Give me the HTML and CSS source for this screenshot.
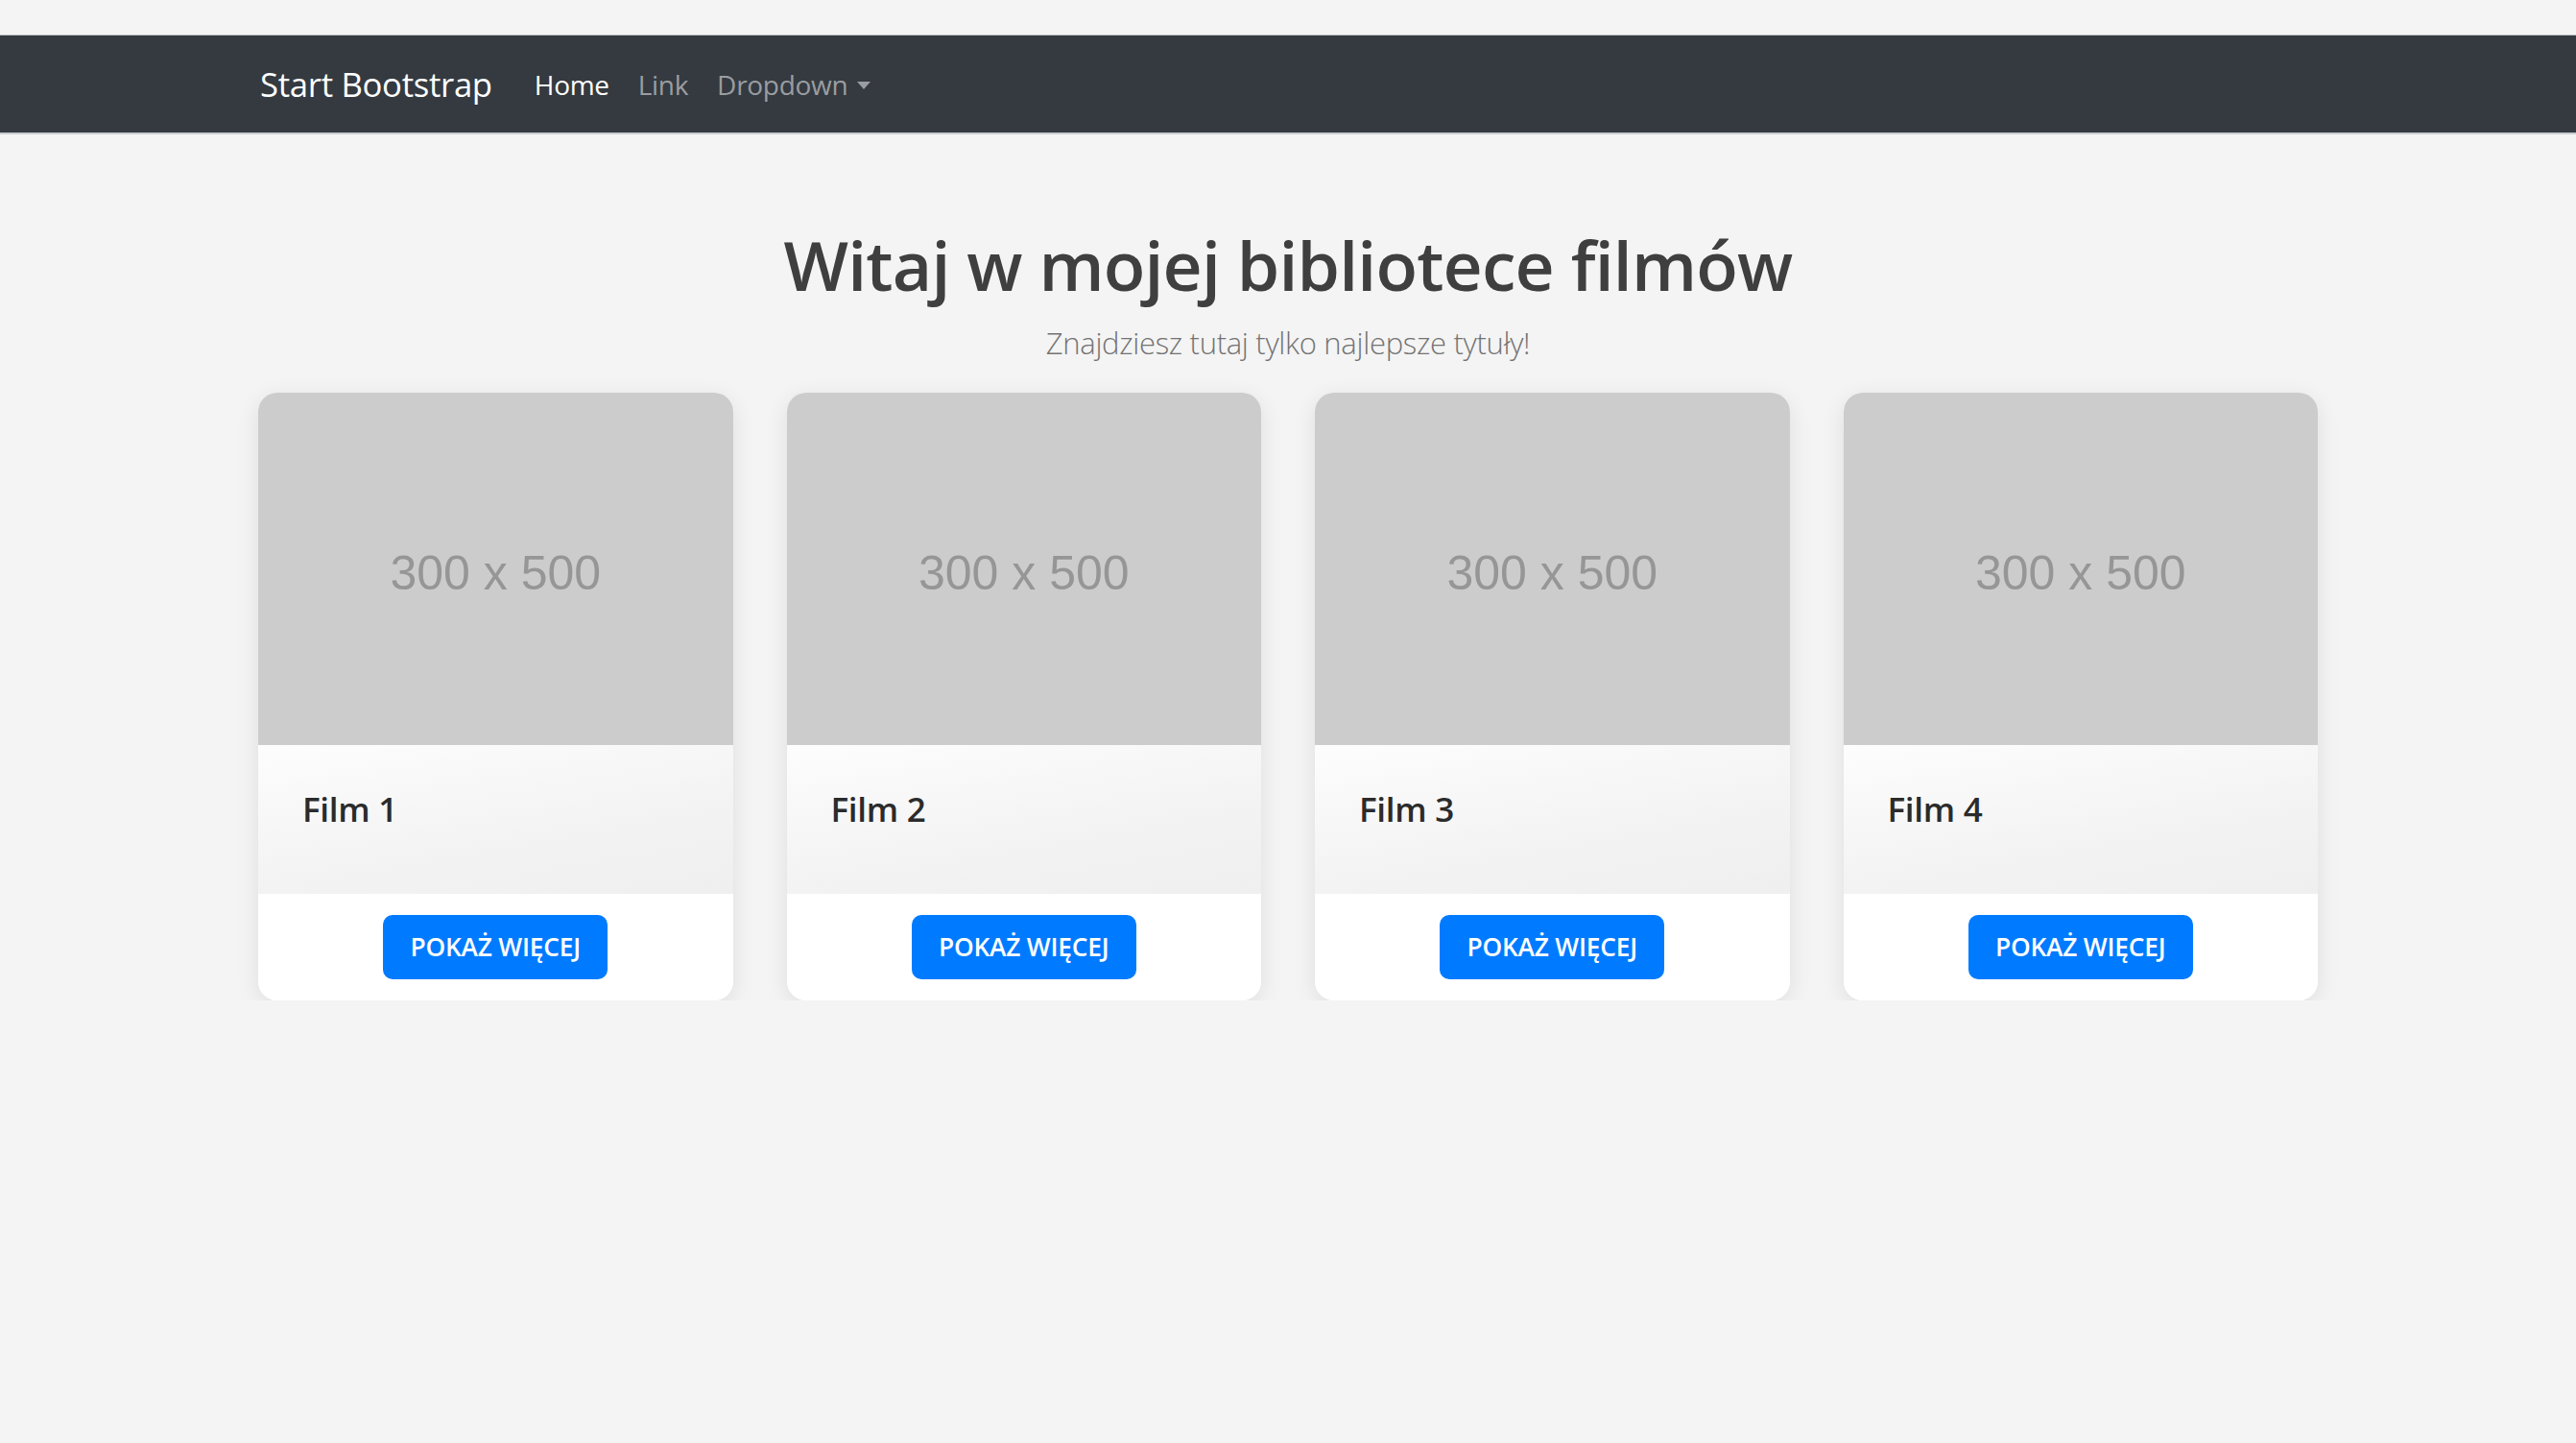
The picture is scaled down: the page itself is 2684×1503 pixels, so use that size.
FILE: index.html
```html
<!DOCTYPE html>
<html lang="pl">
<head>
<meta charset="utf-8">
<title>Biblioteka filmów</title>
<link rel="stylesheet" href="styles.css">
</head>
<body>
<nav class="navbar">
  <div class="container nav-inner">
    <a class="brand" href="#">Start Bootstrap</a>
    <ul class="nav-links">
      <li><a class="nav-link active" href="#">Home</a></li>
      <li><a class="nav-link" href="#">Link</a></li>
      <li><a class="nav-link dropdown" href="#">Dropdown<span class="caret"></span></a></li>
    </ul>
  </div>
</nav>
<main class="container">
  <header class="hero">
    <h1 class="title">Witaj w mojej bibliotece filmów</h1>
    <p class="lead">Znajdziesz tutaj tylko najlepsze tytuły!</p>
  </header>
  <section class="cards">
    <article class="card">
      <div class="poster">300 x 500</div>
      <div class="card-body"><h4 class="card-title">Film 1</h4></div>
      <div class="card-footer"><a class="btn" href="#">POKAŻ WIĘCEJ</a></div>
    </article>
    <article class="card">
      <div class="poster">300 x 500</div>
      <div class="card-body"><h4 class="card-title">Film 2</h4></div>
      <div class="card-footer"><a class="btn" href="#">POKAŻ WIĘCEJ</a></div>
    </article>
    <article class="card">
      <div class="poster">300 x 500</div>
      <div class="card-body"><h4 class="card-title">Film 3</h4></div>
      <div class="card-footer"><a class="btn" href="#">POKAŻ WIĘCEJ</a></div>
    </article>
    <article class="card">
      <div class="poster">300 x 500</div>
      <div class="card-body"><h4 class="card-title">Film 4</h4></div>
      <div class="card-footer"><a class="btn" href="#">POKAŻ WIĘCEJ</a></div>
    </article>
  </section>
</main>
</body>
</html>
```
FILE: styles.css
```css
* { box-sizing: border-box; }
html, body { margin: 0; padding: 0; }
body {
  background: #f4f4f4;
  font-family: "Open Sans", "Noto Sans", sans-serif;
  color: #212529;
  padding-top: 36px;
}
a { text-decoration: none; }

.container {
  width: 2146px;
  margin: 0 auto;
}

.navbar {
  background: #343a40;
  border-top: 1px solid #b9bbbe;
  border-bottom: 2px solid #c9ccd0;
  height: 104px;
}
.nav-inner {
  display: flex;
  align-items: center;
  height: 100%;
  padding-left: 2px;
}
.brand {
  color: #fff;
  font-size: 34.7px;
  letter-spacing: -0.3px;
  margin-right: 44px;
}
.nav-links {
  list-style: none;
  margin: 0;
  padding: 0;
  display: flex;
  gap: 30px;
}
.nav-link {
  color: #9a9da1;
  font-size: 28px;
  letter-spacing: -0.3px;
  display: flex;
  align-items: center;
}
.nav-link.active { color: #fff; }
.caret {
  width: 0;
  height: 0;
  margin-left: 10px;
  margin-top: 2px;
  border-left: 7px solid transparent;
  border-right: 7px solid transparent;
  border-top: 8px solid #9a9da1;
}

.hero {
  text-align: center;
  padding-top: 93px;
}
.title {
  margin: 0;
  font-size: 71.4px;
  font-weight: 600;
  color: #3f3f3f;
  line-height: 1.2;
  letter-spacing: -0.8px;
}
.lead {
  margin: 18px 0 0;
  font-size: 31px;
  font-weight: 300;
  color: #737373;
  line-height: 1.3;
  letter-spacing: -0.3px;
}

.cards {
  margin-top: 32px;
  display: grid;
  grid-template-columns: repeat(4, 1fr);
  gap: 56px;
}
.card {
  background: #fff;
  border-radius: 20px;
  overflow: hidden;
  box-shadow: 0 6px 24px rgba(0, 0, 0, 0.09);
}
.poster {
  height: 367px;
  background: #cccccc;
  color: #969696;
  font-family: "Liberation Sans", Arial, sans-serif;
  font-size: 50px;
  display: flex;
  align-items: center;
  justify-content: center;
  padding-top: 10px;
}
.card-body {
  height: 155px;
  background: linear-gradient(170deg, #fdfdfd 0%, #f3f3f3 60%, #efefef 100%);
  padding: 43px 46px 0;
}
.card-title {
  margin: 0;
  font-size: 35px;
  font-weight: 600;
  color: #2b2b2b;
  letter-spacing: -0.3px;
}
.card-footer {
  height: 111px;
  display: flex;
  align-items: center;
  justify-content: center;
  background: #fff;
}
.btn {
  display: flex;
  align-items: center;
  justify-content: center;
  width: 234px;
  height: 67px;
  border-radius: 10px;
  background: #007bff;
  color: #fff;
  font-size: 26.3px;
  font-weight: 600;
  letter-spacing: -0.2px;
}
```
